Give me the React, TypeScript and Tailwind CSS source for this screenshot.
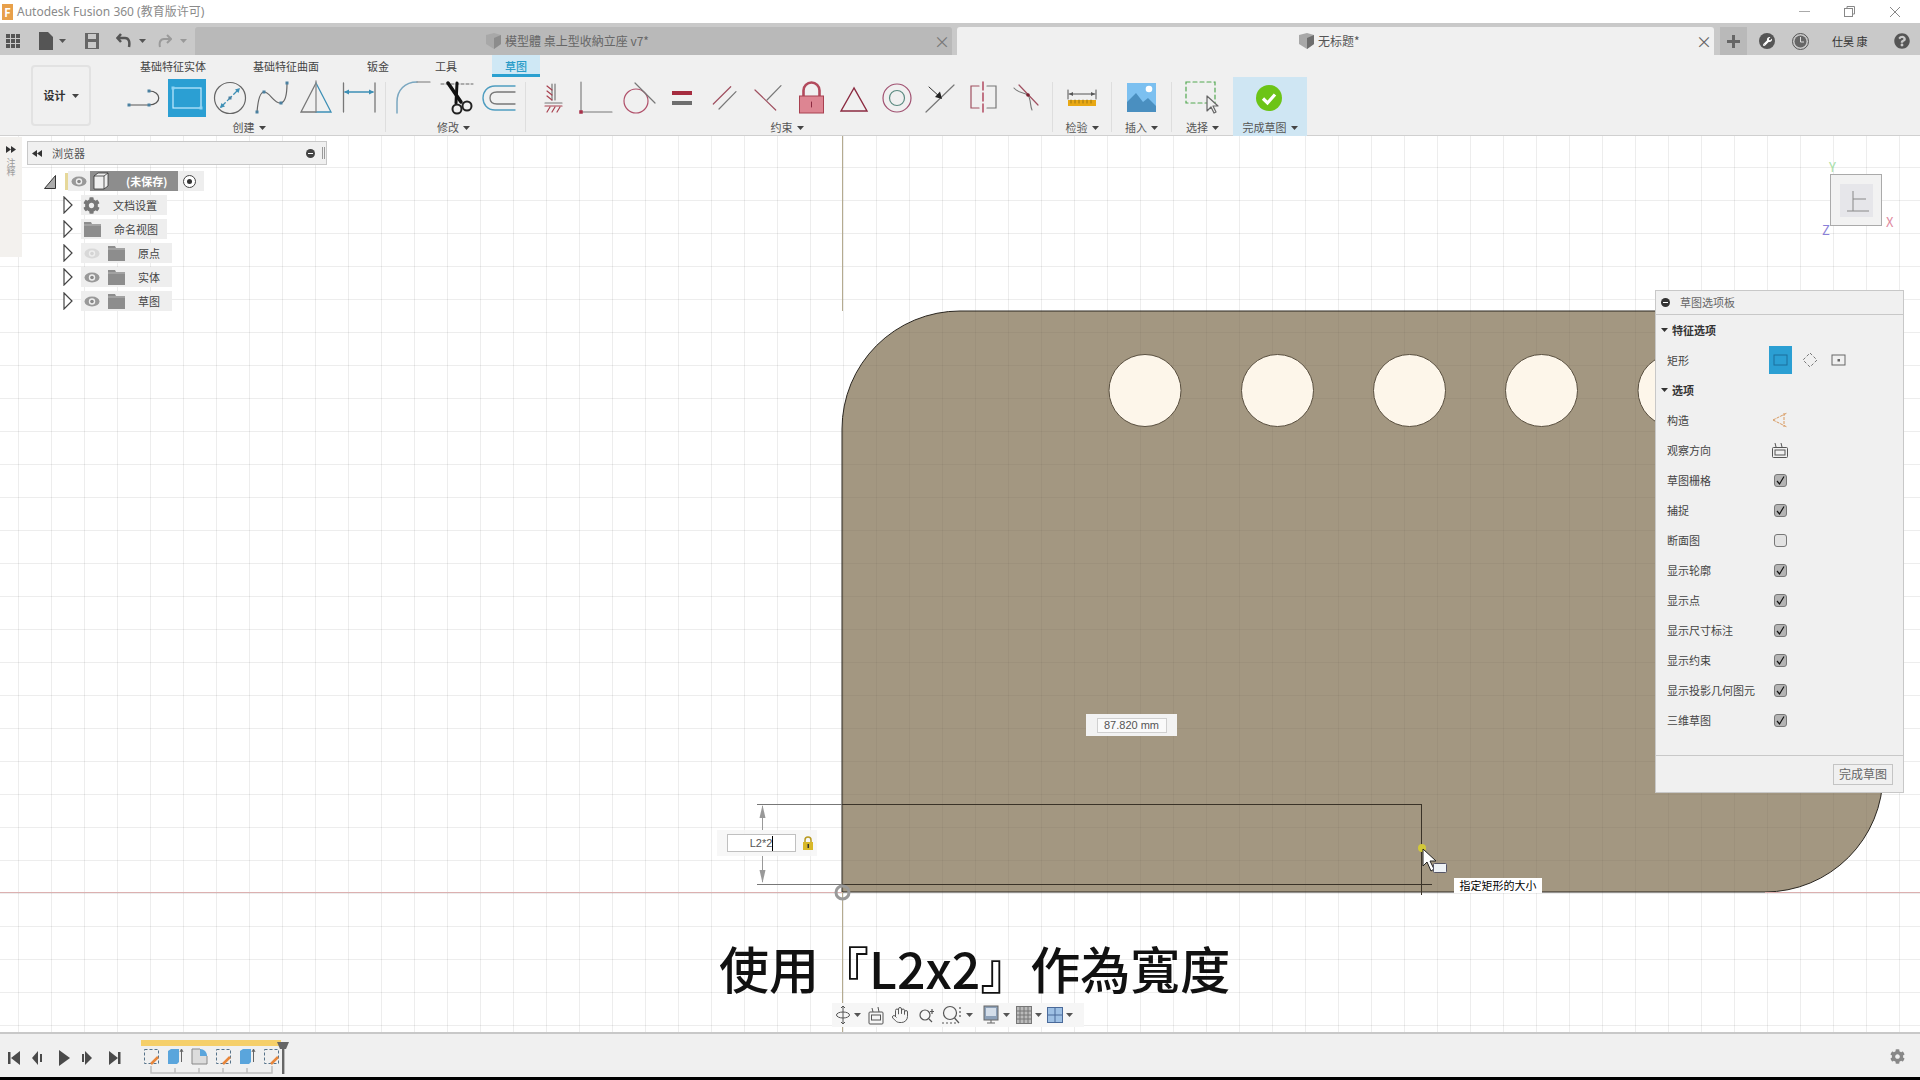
import React from 'react';
import { FaCog, FaQuestionCircle, FaWrench } from 'react-icons/fa';
import { Hand } from 'lucide-react';

const Caret = ({ className = 'fill-[#444]' }: { className?: string }) => (
  <svg width="7" height="4" viewBox="0 0 7 4" className={`inline-block ${className}`}>
    <polygon points="0,0 7,0 3.5,4" />
  </svg>
);

const Ico: React.FC<{ children: React.ReactNode }> = ({ children }) => (
  <svg width="40" height="40" viewBox="0 0 40 40" fill="none" strokeLinecap="round">
    {children}
  </svg>
);

const Dot = ({ x, y, c = '#4a80a0', s = 3 }: { x: number; y: number; c?: string; s?: number }) => (
  <rect x={x - s / 2} y={y - s / 2} width={s} height={s} fill={c} />
);

const create: React.ReactNode[] = [
  <Ico key="line">
    <path d="M5 27H25" stroke="#555" strokeWidth="1.2" />
    <path d="M25 13C38 13 38 27 25 27" stroke="#555" strokeWidth="1.2" />
    <Dot x={5} y={27} /><Dot x={25} y={27} /><Dot x={25} y={13} />
  </Ico>,
  <div key="rect" className="w-[38px] h-[38px] bg-[#2b9fd3] flex items-center justify-center">
    <svg width="38" height="38" viewBox="0 0 38 38" fill="none">
      <rect x="5" y="9" width="28" height="20" stroke="#c4ecff" strokeWidth="1.2" />
      <Dot x={5} y={9} c="#8fd4f4" /><Dot x={33} y={29} c="#8fd4f4" />
    </svg>
  </div>,
  <Ico key="circle">
    <circle cx="20" cy="20" r="15.5" stroke="#666" strokeWidth="1.2" />
    <path d="M11 29L29 11" stroke="#3d8fb5" strokeWidth="1.3" strokeDasharray="6 3" />
    <polygon points="30,10 25,11.5 28.5,15" fill="#3d8fb5" />
    <polygon points="10,30 15,28.5 11.5,25" fill="#3d8fb5" />
    <Dot x={20} y={20} />
  </Ico>,
  <Ico key="spline">
    <path d="M4 34C5 22 7 14 11 14C17 14 21 26 28 25C33 24 34 14 34 5" stroke="#666" strokeWidth="1.2" />
    <Dot x={4} y={34} /><Dot x={11} y={14} /><Dot x={28} y={25} /><Dot x={34} y={5} />
  </Ico>,
  <Ico key="mirror">
    <path d="M20 5L5 34H20" stroke="#777" strokeWidth="1.3" />
    <path d="M20 5L35 34H20" stroke="#3d8fb5" strokeWidth="1.3" />
    <path d="M20 3V34" stroke="#888" strokeWidth="1.3" />
  </Ico>,
  <Ico key="dim">
    <path d="M4.5 5V34M36 5V34" stroke="#777" strokeWidth="1.3" />
    <path d="M6 14H34" stroke="#3d8fb5" strokeWidth="1.3" />
    <polygon points="5,14 10,11.5 10,16.5" fill="#3d8fb5" />
    <polygon points="35,14 30,11.5 30,16.5" fill="#3d8fb5" />
  </Ico>,
];

const modify: React.ReactNode[] = [
  <Ico key="fillet">
    <path d="M4 35V24C4 12 12 4 24 4" stroke="#7aa7c0" strokeWidth="1.5" />
    <path d="M24 4H37" stroke="#777" strokeWidth="1.2" />
  </Ico>,
  <Ico key="trim">
    <path d="M5 6H37" stroke="#666" strokeWidth="1" strokeDasharray="3 2" />
    <path d="M12 5L25 24" stroke="#111" strokeWidth="3.5" />
    <path d="M21 5L20 25" stroke="#111" strokeWidth="3" />
    <circle cx="21" cy="31" r="4.5" stroke="#222" strokeWidth="2" />
    <circle cx="31" cy="28" r="4.5" stroke="#222" strokeWidth="2" />
  </Ico>,
  <Ico key="offset">
    <path d="M36 8H16C8 8 4 14 4 20C4 26 8 32 16 32H36" stroke="#4f9dc0" strokeWidth="1.4" />
    <path d="M36 14H18C13 14 11 17 11 20C11 23 13 26 18 26H36" stroke="#777" strokeWidth="1.3" />
  </Ico>,
];

const constrain: React.ReactNode[] = [
  <Ico key="fix">
    <path d="M19 6V22M22 6V22" stroke="#777" strokeWidth="1.2" />
    <path d="M14 8L19 12M14 13L19 17M14 18L19 22" stroke="#a8404f" strokeWidth="1.2" />
    <path d="M12 25H29" stroke="#777" strokeWidth="1.2" />
    <path d="M12 28H29" stroke="#a8404f" strokeWidth="1.2" />
    <path d="M14 34L17 29M19 34L22 29M24 34L27 29" stroke="#a8404f" strokeWidth="1.2" />
  </Ico>,
  <Ico key="coincident">
    <path d="M5 4V34H36" stroke="#777" strokeWidth="1.1" />
    <Dot x={5} y={34} c="#a8304a" s={3.5} />
  </Ico>,
  <Ico key="tangent">
    <circle cx="17" cy="23" r="12" stroke="#b0506a" strokeWidth="1.2" />
    <path d="M16 5L36 25" stroke="#777" strokeWidth="1.2" />
  </Ico>,
  <div key="equal" className="flex flex-col gap-[6px] ml-[1px]">
    <div className="w-5 h-1 bg-[#a62c3f]" />
    <div className="w-5 h-1 bg-[#6e6e6e]" />
  </div>,
  <Ico key="parallel">
    <path d="M8.3 26L25.7 8.7" stroke="#a05060" strokeWidth="1.2" />
    <path d="M14 31L31 13.7" stroke="#777" strokeWidth="1.2" />
  </Ico>,
  <Ico key="perp">
    <path d="M7 12L27.7 32" stroke="#a05060" strokeWidth="1.2" />
    <path d="M19 22L33 7.7" stroke="#777" strokeWidth="1.2" />
  </Ico>,
  <Ico key="lock">
    <path d="M12.5 18V12.5A8 8 0 0 1 28.5 12.5V18" stroke="#b24a5c" strokeWidth="2.6" />
    <rect x="8.5" y="18" width="24" height="17" fill="#dd8592" stroke="#a84050" strokeWidth="1" />
    <path d="M20.5 24V29" stroke="#8b2a40" strokeWidth="1" />
  </Ico>,
  <Ico key="tri">
    <polygon points="20,10 7,33 33,33" stroke="#8b2a40" strokeWidth="1.4" />
  </Ico>,
  <Ico key="concentric">
    <circle cx="20" cy="20" r="14" stroke="#a05070" strokeWidth="1.2" />
    <circle cx="20" cy="20" r="7.5" stroke="#5a8a80" strokeWidth="1.2" />
  </Ico>,
  <Ico key="collinear">
    <path d="M6 34L34 7" stroke="#777" strokeWidth="1.2" />
    <path d="M9 9L20 19" stroke="#333" strokeWidth="1" />
    <polygon points="22,21 15,19 20,13.5" fill="#222" />
  </Ico>,
  <Ico key="symmetry">
    <path d="M16 8H8V30H16" stroke="#a05060" strokeWidth="1.2" />
    <path d="M24 8H33V30H24" stroke="#777" strokeWidth="1.2" />
    <path d="M20 4V36" stroke="#a8304a" strokeWidth="1.3" strokeDasharray="8 3" />
  </Ico>,
  <Ico key="curvature">
    <path d="M13 7L32 27" stroke="#a05060" strokeWidth="1.2" />
    <path d="M8 10C12 15 20 15 22 17C25 21 24 28 26 32" stroke="#777" strokeWidth="1.1" />
    <circle cx="22" cy="17" r="1.8" fill="#7a2030" />
  </Ico>,
];

const ToolGroup = ({ label, items, className }: { label: string; items: React.ReactNode[]; className?: string }) => (
  <div className={`flex flex-col ${className ?? ''}`}>
    <div className="flex h-[42px]">
      {items.map((it, i) => (
        <div key={i} className="w-[43px] h-[42px] flex items-center justify-center">{it}</div>
      ))}
    </div>
    <div className="h-[17px] pr-[4px] flex items-center justify-center gap-1 text-[11px] text-[#555]">
      {label} <Caret />
    </div>
  </div>
);

const Sep = () => <div className="w-px h-[50px] mt-[5px] bg-[#dedede]" />;

const SingleTool = ({ label, w, children, active }: { label: string; w: string; children: React.ReactNode; active?: boolean }) => (
  <div className={`flex flex-col ${w} ${active ? 'bg-[#cfe6f3]' : ''}`}>
    <div className="h-[42px] flex items-center justify-center">{children}</div>
    <div className="h-[17px] flex items-center justify-center gap-1 text-[11px] text-[#555]">
      {label} <Caret />
    </div>
  </div>
);

const Eye = ({ off }: { off?: boolean }) => (
  <svg width="16" height="11" viewBox="0 0 16 11" className={off ? 'opacity-25' : ''}>
    <ellipse cx="8" cy="5.5" rx="7.5" ry="5" fill="#999" />
    <circle cx="8" cy="5.5" r="3.2" fill="#eee" />
    <circle cx="8" cy="5.5" r="1.8" fill="#888" />
  </svg>
);

const Folder = () => (
  <svg width="17" height="15" viewBox="0 0 17 15">
    <path d="M0 0H7L8 2H17V15H0Z" fill="#8d8d8d" />
    <path d="M0 3H17" stroke="#c4c4c4" strokeWidth="0.8" />
  </svg>
);

const Arrow = () => (
  <svg width="10" height="18" viewBox="0 0 10 18" className="shrink-0">
    <path d="M1 1L9 9L1 17Z" fill="#fff" stroke="#444" strokeWidth="1.2" />
  </svg>
);

const TreeRow = ({ label, icon, width }: { label: string; icon: React.ReactNode; width: string }) => (
  <div className="h-6 flex items-center">
    <div className="w-[63px]" />
    <Arrow />
    <div className="w-2" />
    <div className={`h-[20px] flex items-center bg-[#eeeeee] text-[11px] text-[#444] ${width}`}>{icon}<span>{label}</span></div>
  </div>
);

const paletteRows = [
  { label: '草图栅格', checked: true },
  { label: '捕捉', checked: true },
  { label: '断面图', checked: false },
  { label: '显示轮廓', checked: true },
  { label: '显示点', checked: true },
  { label: '显示尺寸标注', checked: true },
  { label: '显示约束', checked: true },
  { label: '显示投影几何图元', checked: true },
  { label: '三维草图', checked: true },
];

const Check = ({ checked }: { checked: boolean }) => (
  <div className={`w-[13px] h-[13px] rounded-[3px] border border-[#777] flex items-center justify-center ${checked ? 'bg-[#b4b4b4]' : 'bg-[#e2e2e2]'}`}>
    {checked && (
      <svg width="11" height="11" viewBox="0 0 11 11" fill="none">
        <path d="M2 6L4.5 9L9 1.5" stroke="#111" strokeWidth="1.2" />
      </svg>
    )}
  </div>
);

const PaletteRow = ({ label, children }: { label: string; children: React.ReactNode }) => (
  <div className="h-[30px] flex items-center pl-[11px] text-[11px] text-[#444]">
    <span className="w-[107px]">{label}</span>
    {children}
  </div>
);

const SectionTitle = ({ label }: { label: string }) => (
  <div className="h-[30px] flex items-center pl-[5px] gap-1 text-[11px] font-bold text-[#333]">
    <Caret className="fill-[#333]" />
    {label}
  </div>
);

const Timeline = () => {
  const sketch = (x: number) => (
    <g key={x} transform={`translate(${x} 0)`}>
      <rect x="1.5" y="1.5" width="14" height="14" fill="none" stroke="#56738a" strokeWidth="1" strokeDasharray="3 2" />
      <path d="M8 16L15 9" stroke="#e8863a" strokeWidth="2.5" />
    </g>
  );
  const extrude = (x: number) => (
    <g key={x} transform={`translate(${x} 0)`}>
      <path d="M1 3L4 1H12V14L10 16H1Z" fill="#5aa5dc" />
      <path d="M14.5 14V2M13 4L14.5 1L16 4" stroke="#555" fill="none" strokeWidth="0.9" />
    </g>
  );
  return (
    <svg width="160" height="36" viewBox="0 0 160 36" className="shrink-0">
      <rect x="0" y="0" width="140" height="6" fill="#f5cf6a" />
      <g transform="translate(2 8)">
        {sketch(0)}
        {extrude(24)}
        <g transform="translate(48 0)">
          <path d="M1 1H9L16 8V16H1Z" fill="#dcdcdc" stroke="#888" />
          <path d="M9 1C13 1 16 4 16 8L9 8Z" fill="#5aa5dc" />
        </g>
        {sketch(72)}
        {extrude(96)}
        {sketch(120)}
      </g>
      <path d="M10 26V33H131V26M34 28V33M58 28V33M82 28V33M106 28V33" fill="none" stroke="#bdbdbd" strokeWidth="1.5" />
      <polygon points="136,2 148,2 145,9 139,9" fill="#666" />
      <rect x="141" y="7" width="2.4" height="27" fill="#666" />
    </svg>
  );
};

const Transport = () => (
  <svg width="124" height="18" viewBox="0 0 124 18" className="fill-[#4a4a4a]">
    <rect x="8" y="3" width="2.5" height="12" /><polygon points="20,2 11,9 20,16" />
    <polygon points="38,2 32,9 38,16" /><rect x="40" y="5" width="2" height="8" />
    <polygon points="59,1 70,9 59,17" />
    <rect x="82" y="5" width="2" height="8" /><polygon points="85,2 92,9 85,16" />
    <polygon points="109,2 118,9 109,16" /><rect x="118" y="3" width="2.5" height="12" />
  </svg>
);

const NavBar = () => (
  <div className="absolute left-[832px] top-[867px] w-[252px] h-6 bg-[#f6f6f6] flex items-center pl-[3px] gap-[3px]">
    <svg width="16" height="20" viewBox="0 0 16 20" fill="none" stroke="#555" strokeWidth="1">
      <path d="M8 1V19M6 3L8 1L10 3M6 17L8 19L10 17" />
      <ellipse cx="8" cy="10" rx="6.5" ry="3" />
    </svg>
    <Caret className="fill-[#555] mr-[4px]" />
    <svg width="16" height="20" viewBox="0 0 16 20" fill="none" stroke="#555" strokeWidth="1">
      <rect x="1" y="7" width="14" height="12" rx="1" />
      <rect x="3.5" y="10" width="9" height="5" />
      <path d="M5 7L4 3M11 7L10 2" />
    </svg>
    <Hand className="w-[18px] h-[18px] text-[#555] ml-[4px]" strokeWidth={1.3} />
    <svg width="18" height="18" viewBox="0 0 18 18" fill="none" stroke="#555" strokeWidth="1.2" className="ml-[6px]">
      <circle cx="7" cy="9" r="5" /><path d="M11 13L14 16M14 3V8M12 5.500H16" />
    </svg>
    <svg width="22" height="20" viewBox="0 0 22 20" fill="none" stroke="#555" strokeWidth="1.2" className="ml-[2px]">
      <circle cx="9" cy="8" r="6.500" /><path d="M13.500 13L18 18" />
      <path d="M1 18H16M19 2V14" strokeDasharray="2 2" />
    </svg>
    <Caret className="fill-[#555] mr-[6px]" />
    <svg width="18" height="20" viewBox="0 0 18 20" fill="none">
      <rect x="2" y="1" width="14" height="14" fill="#8ca0b8" stroke="#666" /><rect x="4" y="3" width="10" height="8" fill="#d4deea" />
      <path d="M5 18H13M9 15V18" stroke="#666" />
    </svg>
    <Caret className="fill-[#555] mr-[3px]" />
    <svg width="16" height="20" viewBox="0 0 16 20" fill="none" stroke="#777" strokeWidth="1">
      <rect x="0.500" y="1.500" width="15" height="17" fill="#bbb" />
      <path d="M4 1V19M8 1V19M12 1V19M0 6H16M0 10H16M0 14H16" />
    </svg>
    <Caret className="fill-[#555] mr-[2px]" />
    <svg width="16" height="18" viewBox="0 0 16 18">
      <rect x="0.500" y="1.500" width="15" height="15" fill="#9ec0e4" stroke="#4a6a9a" />
      <path d="M8 1V17M0 9H16" stroke="#4a6a9a" />
    </svg>
    <Caret className="fill-[#555]" />
  </div>
);

export default function App() {
  return (
    <div className="w-[1920px] h-[1080px] flex flex-col overflow-hidden bg-white font-['Noto_Sans_CJK_SC','Noto_Sans',sans-serif]">
      {/* title bar */}
      <div className="h-[23px] flex items-center bg-white shrink-0">
        <div className="w-[11px] h-[16px] ml-[2px] bg-[#e8a04a] text-[#fff] text-[11px] font-bold leading-4 text-center">F</div>
        <span className="ml-1 text-[12px] text-[#8a8a8a] font-['Noto_Sans','Noto_Sans_CJK_SC',sans-serif]">Autodesk Fusion 360 (教育版许可)</span>
        <div className="ml-auto flex items-center gap-[34px] pr-[19px]">
          <div className="w-[11px] h-px bg-[#aaa]" />
          <svg width="11" height="11" viewBox="0 0 11 11" fill="none" stroke="#888"><rect x="0.500" y="2.500" width="8" height="8" /><path d="M3 2.500V0.500H10.500V8H8.500" /></svg>
          <svg width="12" height="12" viewBox="0 0 12 12" stroke="#888"><path d="M1 1L11 11M11 1L1 11" /></svg>
        </div>
      </div>

      {/* tab strip */}
      <div className="h-8 flex bg-[#c9c9c9] pt-1 shrink-0">
        <div className="w-[195px] h-7 flex items-center">
          <svg width="14" height="14" viewBox="0 0 14 14" className="ml-[6px] fill-[#555]">
            <rect x="0" y="0" width="4" height="4" /><rect x="5" y="0" width="4" height="4" /><rect x="10" y="0" width="4" height="4" />
            <rect x="0" y="5" width="4" height="4" /><rect x="5" y="5" width="4" height="4" /><rect x="10" y="5" width="4" height="4" />
            <rect x="0" y="10" width="4" height="4" /><rect x="5" y="10" width="4" height="4" /><rect x="10" y="10" width="4" height="4" />
          </svg>
          <svg width="14" height="18" viewBox="0 0 14 18" className="ml-[19px] fill-[#555]"><path d="M0 0H9L14 5V18H0Z" /></svg>
          <Caret className="fill-[#555] ml-[6px]" />
          <svg width="14" height="16" viewBox="0 0 14 16" className="ml-[19px] fill-[#666]"><path d="M0 0H14V16H0Z" /><rect x="3" y="1" width="8" height="5" fill="#c9c9c9" /><rect x="3" y="9" width="8" height="6" fill="#c9c9c9" /></svg>
          <svg width="16" height="16" viewBox="0 0 16 16" fill="none" stroke="#555" strokeWidth="2.5" className="ml-[17px]"><path d="M5 1L1.500 5L5 9M2 5H9C13 5 14 9 13 14" /></svg>
          <Caret className="fill-[#555] ml-[7px]" />
          <svg width="14" height="14" viewBox="0 0 14 14" fill="none" stroke="#9a9a9a" strokeWidth="2" className="ml-[12px]"><path d="M9 1L13 5L9 9M12 5H6C2 5 1 9 2 13" /></svg>
          <Caret className="fill-[#999] ml-[8px]" />
        </div>
        <div className="w-[757px] h-7 rounded-t-[3px] bg-[#b9b9b9] flex items-center relative">
          <svg width="15" height="16" viewBox="0 0 15 16" className="absolute left-[291px]"><path d="M0 2L8 0L15 2V11L8 16L0 11Z" fill="#a8a8a8" /><path d="M8 5L15 2V11L8 16Z" fill="#8c8c8c" /></svg>
          <span className="absolute left-[310px] text-[12px] text-[#666] font-['Noto_Sans_CJK_TC',sans-serif] whitespace-nowrap">模型體 桌上型收納立座 v7*</span>
          <span className="absolute left-[739px] text-[16px] leading-none text-[#777]">×</span>
        </div>
        <div className="w-[757px] h-7 ml-[5px] rounded-t-[3px] bg-[#f0f0f0] flex items-center relative">
          <svg width="15" height="16" viewBox="0 0 15 16" className="absolute left-[342px]"><path d="M0 2L8 0L15 2V11L8 16L0 11Z" fill="#a8a8a8" /><path d="M8 5L15 2V11L8 16Z" fill="#6e6e6e" /></svg>
          <span className="absolute left-[361px] text-[12px] text-[#555] whitespace-nowrap">无标题*</span>
          <span className="absolute left-[739px] text-[16px] leading-none text-[#666]">×</span>
        </div>
        <div className="w-[27px] h-7 ml-[6px] bg-[#b9b9b9] flex items-center justify-center">
          <svg width="13" height="13" viewBox="0 0 13 13" className="fill-[#666]"><rect x="5" y="0" width="3" height="13" /><rect x="0" y="5" width="13" height="3" /></svg>
        </div>
        <div className="h-7 flex items-center">
          <div className="ml-[12px] w-4 h-4 rounded-full bg-[#555] flex items-center justify-center"><FaWrench className="text-white text-[9px]" /></div>
          <svg width="17" height="17" viewBox="0 0 17 17" className="ml-[17px]"><circle cx="8.500" cy="8.500" r="8" fill="none" stroke="#555" /><circle cx="8.500" cy="8.500" r="6" fill="#666" /><path d="M8.500 4V9H12" fill="none" stroke="#ddd" /></svg>
          <span className="ml-[23px] text-[11px] text-[#333] whitespace-nowrap">仕昊 康</span>
          <FaQuestionCircle className="ml-[27px] text-[#555] text-[16px]" />
        </div>
      </div>

      {/* ribbon */}
      <div className="h-[81px] flex bg-[#f0f0f0] border-b border-[#d0d0d0] shrink-0">
        <div className="w-[122px] shrink-0 pl-[31px] pt-[10px]">
          <div className="w-[60px] h-[61px] rounded-[4px] border-2 border-[#e2e2e2] flex items-center justify-center gap-[6px] text-[11px] font-bold text-[#333]">
            设计 <Caret />
          </div>
        </div>
        <div className="flex flex-col flex-1">
          <div className="h-[22px] flex text-[11px] text-[#444]">
            <span className="w-[66px] ml-[18px] mt-[3px] whitespace-nowrap">基础特征实体</span>
            <span className="w-[67px] ml-[47px] mt-[3px] whitespace-nowrap">基础特征曲面</span>
            <span className="ml-[47px] mt-[3px]">钣金</span>
            <span className="ml-[46px] mt-[3px]">工具</span>
            <span className="w-12 ml-[35px] h-[22px] pt-[3px] text-center bg-[#cfe8f5] border-b-[3px] border-[#2aa0d0] text-[#2a9cc8] font-medium">草图</span>
          </div>
          <div className="flex flex-1">
            <ToolGroup label="创建" items={create} />
            <div className="w-[11px] flex justify-center"><Sep /></div>
            <ToolGroup label="修改" items={modify} />
            <div className="w-[11px] flex justify-center"><Sep /></div>
            <ToolGroup label="约束" items={constrain} />
            <div className="w-[5px]" />
            <Sep />
            <SingleTool label="检验" w="w-[58px]">
              <Ico>
                <path d="M6 12V21M34 12V21M7 16H33" stroke="#555" strokeWidth="1" />
                <polygon points="7,16 11,14 11,18" fill="#555" />
                <polygon points="33,16 29,14 29,18" fill="#555" />
                <rect x="6" y="22" width="28" height="6" fill="#e8a814" />
                <path d="M9 22V25M13 22V25M17 22V25M21 22V25M25 22V25M29 22V25" stroke="#8a6a10" strokeWidth="0.8" />
              </Ico>
            </SingleTool>
            <Sep />
            <SingleTool label="插入" w="w-[59px]">
              <Ico>
                <rect x="5" y="5" width="29" height="29" fill="#7cc0f0" />
                <path d="M5 34V24L14 15L21 24L26 20L34 28V34Z" fill="#4a8fc0" />
                <circle cx="27" cy="11" r="3.300" fill="#fff" />
              </Ico>
            </SingleTool>
            <Sep />
            <SingleTool label="选择" w="w-[61px]">
              <Ico>
                <rect x="3" y="4" width="29" height="21" stroke="#52a850" strokeWidth="1.2" strokeDasharray="4 3" />
                <polygon points="24,18 24,33 28,29 31,35 33,34 30,28 35,28" fill="#f0f0f0" stroke="#666" strokeWidth="1.2" strokeLinejoin="round" />
              </Ico>
            </SingleTool>
            <SingleTool label="完成草图" w="w-[74px]" active>
              <svg width="26" height="26" viewBox="0 0 26 26" fill="none" className="mr-[3px]">
                <circle cx="13" cy="13" r="13" fill="#6cc417" />
                <path d="M7 13.500L11.500 18L19 9.500" stroke="#fff" strokeWidth="3.200" />
              </svg>
            </SingleTool>
          </div>
        </div>
      </div>

      {/* canvas */}
      <div className="relative flex-1 overflow-hidden">
        <svg width="1920" height="896" viewBox="0 0 1920 896" className="absolute left-0 top-0">
          <defs>
            <pattern id="grid" x="18" y="31" width="33" height="33" patternUnits="userSpaceOnUse">
              <path d="M0.500 0V33M0 0.500H33" stroke="#000" strokeOpacity="0.07" fill="none" />
            </pattern>
            <pattern id="bodygrid" x="18" y="31" width="33" height="33" patternUnits="userSpaceOnUse">
              <path d="M0.500 0V33M0 0.500H33" stroke="#000" strokeOpacity="0.04" fill="none" />
            </pattern>
          </defs>
          <rect width="1920" height="896" fill="url(#grid)" />
          <path d="M842 756V293A118 118 0 0 1 960 175H1883V638A118 118 0 0 1 1765 756Z" fill="#a39781" stroke="#2a2620" />
          <path d="M842 756V293A118 118 0 0 1 960 175H1883V638A118 118 0 0 1 1765 756Z" fill="url(#bodygrid)" />
          {[1145, 1277.5, 1409.5, 1541.5, 1674].map(cx => (
            <circle key={cx} cx={cx} cy={254.500} r="36" fill="#fdf6ea" stroke="#5a5040" />
          ))}
          <path d="M842.500 0V175" stroke="#b5ab90" />
          <path d="M842.500 756V896" stroke="#b5ab90" />
          <path d="M0 756.500H842" stroke="#dcb0b0" />
          <path d="M1765 756.500H1920" stroke="#dcb0b0" />
          <path d="M842 668.500H1422M842 748.500H1432M1421.500 668V759" stroke="#3a3328" />
          <path d="M757 668.500H842M757 748.500H842" stroke="#777" />
          <path d="M762.500 670V694M762.500 720V746" stroke="#999" />
          <polygon points="762.500,669 759.500,682 765.500,682" fill="#999" />
          <polygon points="762.500,747 759.500,734 765.500,734" fill="#999" />
          <circle cx="842.500" cy="756.500" r="6.500" fill="none" stroke="#999" strokeWidth="3" />
          <circle cx="1422" cy="712" r="4" fill="#d2c838" />
          <polygon points="1423,713 1423,730 1427,726 1431,735 1434,733 1430,725 1436,725" fill="#fff" stroke="#222" />
          <rect x="1433.500" y="727.500" width="13" height="9" rx="1" fill="#eef2f6" stroke="#556" />
        </svg>

        {/* left strip */}
        <div className="absolute left-0 top-px w-[22px] h-[120px] bg-[#f3f1ee] flex flex-col items-center pt-[9px] gap-[5px]">
          <svg width="10" height="7" viewBox="0 0 10 7" className="fill-[#333]"><polygon points="0,0 5,3.500 0,7" /><polygon points="5,0 10,3.500 5,7" /></svg>
          <span className="text-[9px] text-[#999] [writing-mode:vertical-rl] leading-none">注释</span>
        </div>

        {/* browser */}
        <div className="absolute left-[27px] top-[5px] w-[300px] h-6 bg-[#f0f0f0] border border-[#c8c8c8] flex items-center pl-[4px] text-[11px] text-[#555]">
          <svg width="10" height="7" viewBox="0 0 10 7" className="fill-[#333]"><polygon points="5,0 0,3.500 5,7" /><polygon points="10,0 5,3.500 10,7" /></svg>
          <span className="ml-[10px]">浏览器</span>
          <div className="ml-auto w-[9px] h-[9px] rounded-full bg-[#444] flex items-center justify-center mr-[7px]"><div className="w-[5px] h-px bg-white" /></div>
          <div className="w-[3px] h-3 border-x border-[#999] mr-[1px]" />
        </div>
        <div className="absolute left-0 top-[33px] flex flex-col">
          <div className="h-6 flex items-center">
            <svg width="12" height="14" viewBox="0 0 12 14" className="ml-[44px] mt-[2px]"><polygon points="11.500,0.500 11.500,13.500 0.500,13.500" fill="#aaa" stroke="#333" /></svg>
            <div className="w-[3px] h-[17px] ml-[9px] bg-[#e6d89a]" />
            <div className="w-[136px] h-5 bg-[#eeeeee] flex items-center pl-[3px]">
              <Eye />
              <div className="w-[88px] h-5 ml-[3px] bg-[#8d8d8d] flex items-center pl-[3px]">
                <svg width="16" height="18" viewBox="0 0 16 18"><path d="M1 4L5 1H15V14L11 17H1Z" fill="#eee" stroke="#333" strokeWidth="0.800" /><path d="M11 4V17M1 4H11L15 1" stroke="#333" strokeWidth="0.800" fill="none" /></svg>
                <span className="ml-[17px] text-[11px] font-bold text-white whitespace-nowrap">(未保存)</span>
              </div>
              <svg width="13" height="13" viewBox="0 0 13 13" className="ml-[5px]"><circle cx="6.500" cy="6.500" r="6" fill="#fff" stroke="#444" /><circle cx="6.500" cy="6.500" r="2.500" fill="#333" /></svg>
            </div>
          </div>
          <TreeRow label="文档设置" width="w-[86px]" icon={<FaCog className="text-[#777] text-[17px] ml-[2px] mr-[13px] shrink-0" />} />
          <TreeRow label="命名视图" width="w-[86px]" icon={<span className="ml-[3px] mr-[13px] flex"><Folder /></span>} />
          <TreeRow label="原点" width="w-[91px]" icon={<span className="ml-[3px] mr-[13px] flex items-center gap-2"><Eye off /><Folder /></span>} />
          <TreeRow label="实体" width="w-[91px]" icon={<span className="ml-[3px] mr-[13px] flex items-center gap-2"><Eye /><Folder /></span>} />
          <TreeRow label="草图" width="w-[91px]" icon={<span className="ml-[3px] mr-[13px] flex items-center gap-2"><Eye /><Folder /></span>} />
        </div>

        {/* view cube */}
        <div className="absolute left-[1830px] top-[38px] w-[52px] h-[52px] bg-[#f2f2f2] border border-[#aaa] flex items-center justify-center">
          <div className="w-[33px] h-[33px] bg-[#e6e6ea] flex items-center justify-center">
            <svg width="26" height="26" viewBox="0 0 26 26" fill="none" stroke="#888" strokeWidth="1">
              <path d="M10 4V24M10 12H23M4 24H26" />
            </svg>
          </div>
        </div>
        <span className="absolute left-[1829px] top-[23px] text-[13px] leading-4 text-[#a8e0a8]">Y</span>
        <span className="absolute left-[1886px] top-[78px] text-[13px] leading-4 text-[#e08aa0]">X</span>
        <span className="absolute left-[1822px] top-[86px] text-[13px] leading-4 text-[#8a80d8]">Z</span>

        {/* sketch palette */}
        <div className="absolute left-[1655px] top-[154px] w-[249px] h-[503px] bg-[#f0f0f0] border border-[#c8c8c8] flex flex-col">
          <div className="h-6 flex items-center pl-[5px] border-b border-[#c8c8c8] text-[11px] text-[#666] shrink-0">
            <div className="w-[9px] h-[9px] rounded-full bg-[#333] flex items-center justify-center mr-[10px]"><div className="w-[5px] h-px bg-white" /></div>
            草图选项板
          </div>
          <SectionTitle label="特征选项" />
          <div className="h-[30px] flex items-center pl-[11px] text-[11px] text-[#444]">
            <span className="w-[102px]">矩形</span>
            <div className="w-[23px] h-[28px] bg-[#2b9fd3] flex items-center justify-center">
              <svg width="15" height="12" viewBox="0 0 15 12" fill="none" stroke="#1d6f9c"><rect x="1" y="1" width="13" height="10" /></svg>
            </div>
            <svg width="18" height="18" viewBox="0 0 18 18" fill="none" stroke="#777" strokeDasharray="3 2" className="ml-[9px]"><path d="M9 2L16 9L9 16L2 9Z" /></svg>
            <svg width="16" height="14" viewBox="0 0 16 14" fill="none" stroke="#666" className="ml-[12px]"><rect x="1" y="2" width="13" height="10" /><rect x="7" y="6.500" width="1.500" height="1.500" fill="#666" /></svg>
          </div>
          <SectionTitle label="选项" />
          <PaletteRow label="构造">
            <svg width="18" height="18" viewBox="0 0 18 18" fill="none" stroke="#d89a60" className="-ml-[2px]"><path d="M1 9L15 2M1 9L15 16M12 2V16" strokeDasharray="3 1" /></svg>
          </PaletteRow>
          <PaletteRow label="观察方向">
            <svg width="16" height="16" viewBox="0 0 16 16" fill="none" stroke="#555" className="-ml-[2px]"><rect x="0.500" y="5.500" width="15" height="10" rx="1" /><rect x="3" y="8" width="10" height="5" /><path d="M4 5L3 1M10 5L9 1" /></svg>
          </PaletteRow>
          {paletteRows.map(r => (
            <PaletteRow key={r.label} label={r.label}><Check checked={r.checked} /></PaletteRow>
          ))}
          <div className="mt-auto h-[37px] border-t border-[#c8c8c8] flex items-center justify-end pr-[10px] shrink-0">
            <div className="w-[60px] h-[21px] border border-[#c4c4c4] flex items-center justify-center text-[12px] text-[#666]">完成草图</div>
          </div>
        </div>

        {/* dimension inputs */}
        <div className="absolute left-[717px] top-[694px] w-[100px] h-[26px] bg-[#f5f5f5]/80 flex items-center pl-[10px]">
          <div className="w-[69px] h-[18px] bg-white border border-[#c0c0c0] flex items-center justify-center text-[11px] text-[#555] font-['Liberation_Sans',sans-serif]">
            <span>L2*2</span><span className="w-px h-[15px] bg-black" />
          </div>
          <svg width="12" height="14" viewBox="0 0 12 14" className="ml-[6px]">
            <path d="M3 6V4A3 3 0 0 1 9 4V6" fill="none" stroke="#b89a20" strokeWidth="1.500" />
            <rect x="1" y="6" width="10" height="8" fill="#d8b828" />
            <rect x="5.500" y="8" width="1.500" height="4" fill="#333" />
          </svg>
        </div>
        <div className="absolute left-[1086px] top-[578px] w-[91px] h-[22px] bg-[#f2f2f2] flex items-center justify-center">
          <div className="w-[70px] h-[15px] bg-white/60 border border-[#d0d0d0] flex items-center justify-center text-[11px] text-[#555] font-['Liberation_Sans',sans-serif]">87.820 mm</div>
        </div>
        <div className="absolute left-[1454px] top-[742px] w-[88px] h-[15px] bg-white flex items-center justify-center text-[11px] leading-none text-black whitespace-nowrap">指定矩形的大小</div>

        {/* caption */}
        <div className="absolute left-[719px] top-[801px] text-[50px] leading-[60px] font-medium text-[#111] whitespace-nowrap font-['Noto_Sans_CJK_TC',sans-serif]">使用『L2x2』作為寬度</div>

        <NavBar />
      </div>

      {/* timeline */}
      <div className="h-[45px] bg-[#f0f0f0] border-t-2 border-[#c8c8c8] flex items-center shrink-0 relative">
        <div className="mt-[5px] flex items-center"><Transport /></div>
        <div className="ml-[17px] mt-[4px] flex"><Timeline /></div>
        <FaCog className="absolute right-[15px] top-[15px] text-[#888] text-[15px]" />
      </div>
      <div className="h-[3px] bg-black shrink-0" />
    </div>
  );
}
